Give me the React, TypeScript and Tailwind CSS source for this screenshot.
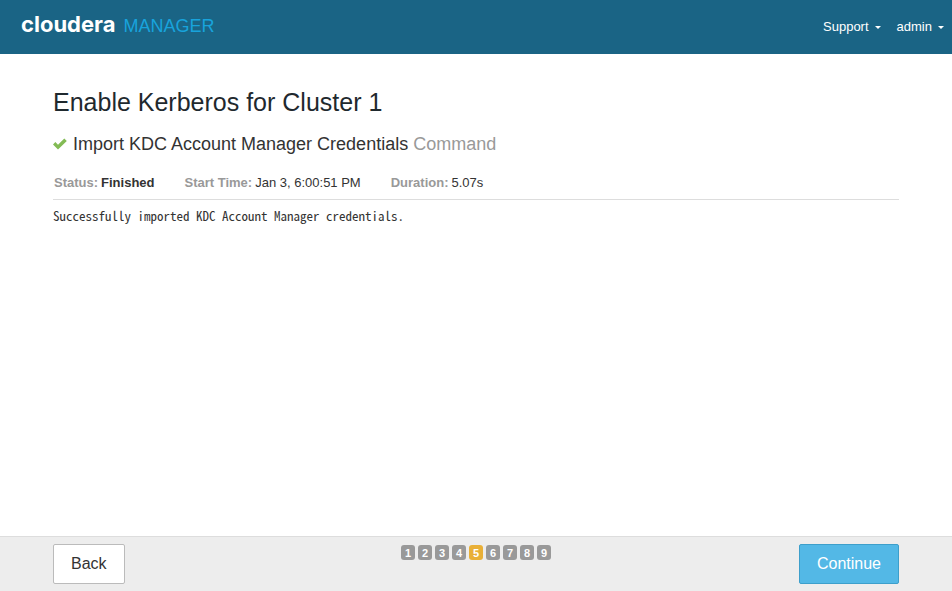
const steps = [1, 2, 3, 4, 5, 6, 7, 8, 9];
const currentStep = 5;

function Logo() {
  return (
    <a href="#" aria-label="Cloudera Manager home" className="flex items-baseline gap-2 pb-1 leading-6 whitespace-nowrap">
      <span className="font-['Inter',sans-serif] text-[22px] leading-6 font-bold text-white">cloudera</span>
      <span className="text-lg leading-6 text-[#18a3dc]">MANAGER</span>
    </a>
  );
}

function MenuButton({ label }: { label: string }) {
  return (
    <button type="button" aria-haspopup="menu" className="flex items-center gap-1.5 text-[13px] leading-5 text-white">
      {label}
      <svg width="6" height="3" viewBox="0 0 6 3" fill="currentColor" aria-hidden="true">
        <path d="M0 0h6L3 3z" />
      </svg>
    </button>
  );
}

function Detail({ label, children }: { label: string; children: React.ReactNode }) {
  return (
    <div className="flex gap-[3px]">
      <dt className="font-bold text-[#999]">{label}</dt>
      <dd>{children}</dd>
    </div>
  );
}

export default function App() {
  return (
    <div className="flex min-h-screen flex-col bg-white font-['Liberation_Sans',Arial,sans-serif] text-[13px] leading-5 text-[#333]">
      <header className="flex h-[54px] items-center justify-between bg-[#1a6485] pr-2 pl-[21px]">
        <Logo />
        <nav className="flex gap-4">
          <MenuButton label="Support" />
          <MenuButton label="admin" />
        </nav>
      </header>

      <main className="flex-1 px-[53px] pt-8">
        <h1 className="text-[25px] leading-8 text-[#1f292e]">Enable Kerberos for Cluster 1</h1>
        <h2 className="mt-3.5 flex items-center gap-1.5 text-lg leading-6">
          <svg width="14" height="12" viewBox="0 0 14 12" fill="#83bb55" aria-label="Succeeded" role="img">
            <path d="M0 6.500 2.400 4.100 5 6.700 11.300 .5 13.800 2.900 5 11.600z" />
          </svg>
          <span>
            Import KDC Account Manager Credentials <span className="text-[#999]">Command</span>
          </span>
        </h2>
        <dl className="mt-[17px] flex gap-[30px] border-b border-[#ddd] pb-1.5 pl-px">
          <Detail label="Status:">
            <strong>Finished</strong>
          </Detail>
          <Detail label="Start Time:">Jan 3, 6:00:51 PM</Detail>
          <Detail label="Duration:">5.07s</Detail>
        </dl>
        <pre className="mt-1.5 font-['Noto_Sans_Mono_CJK_SC','Liberation_Mono',monospace] text-[13px] leading-5">
          Successfully imported KDC Account Manager credentials.
        </pre>
      </main>

      <footer className="grid h-[55px] grid-cols-[1fr_auto_1fr] items-start border-t border-[#ddd] bg-[#ededed] px-[53px] pt-[7px]">
        <button
          type="button"
          className="h-10 justify-self-start rounded-xs border border-[#bbb] bg-white px-[17px] text-base text-[#333]"
        >
          Back
        </button>
        <ol className="flex gap-[3px] pt-px" aria-label="Wizard steps">
          {steps.map((step) => (
            <li
              key={step}
              aria-current={step === currentStep ? "step" : undefined}
              className={`h-[15px] w-3.5 rounded-[3px] text-center text-[11px] leading-4 font-bold text-white ${
                step === currentStep ? "bg-[#e9b037]" : "bg-[#999]"
              }`}
            >
              {step}
            </li>
          ))}
        </ol>
        <button
          type="button"
          className="h-10 justify-self-end rounded-xs border border-[#3d9fcb] bg-[#53b8e6] px-[17px] text-base text-white"
        >
          Continue
        </button>
      </footer>
    </div>
  );
}
